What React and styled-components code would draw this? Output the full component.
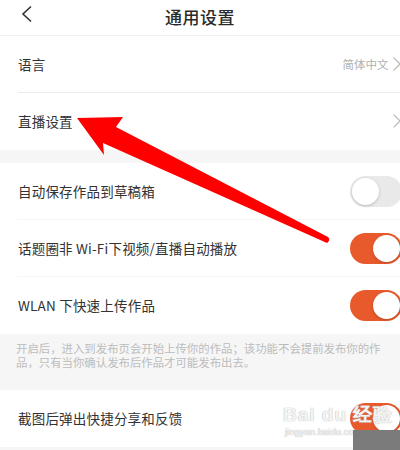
import React from "react";
import styled, { createGlobalStyle } from "styled-components";

const GlobalStyle = createGlobalStyle`
  body {
    margin: 0;
    background: #f6f6f6;
    font-family: "Noto Sans CJK SC", "Noto Sans", sans-serif;
  }
`;

const Page = styled.div`
  position: relative;
  width: 400px;
  height: 450px;
  overflow: hidden;
  background: #f6f6f6;
`;

const Header = styled.div`
  height: 36px;
  display: flex;
  align-items: center;
  justify-content: center;
  position: relative;
  background: #fff;
  border-bottom: 1px solid #f0f0f0;
  box-sizing: border-box;
`;

const Back = styled.div`
  position: absolute;
  left: 20px;
  top: 5px;
  display: flex;
`;

const Title = styled.div`
  font-size: 17px;
  font-weight: 500;
  color: #2a2a2a;
  letter-spacing: 0.5px;
  margin-top: -3px;
`;

const Group = styled.div`
  background: #fff;
  margin-bottom: ${(p) => p.gap || 0}px;
`;

const Row = styled.div`
  height: 57px;
  display: flex;
  align-items: center;
  justify-content: space-between;
  margin-left: 18px;
  box-sizing: border-box;
  border-bottom: 1px solid ${(p) => (p.line ? p.line : "transparent")};
`;

const Label = styled.span`
  font-size: 13.5px;
  color: #333;
  letter-spacing: 0.2px;
`;

const Right = styled.div`
  display: flex;
  align-items: center;
  gap: 4px;
  margin-right: -2px;
`;

const Value = styled.span`
  font-size: 11.5px;
  color: #b0b0b0;
`;

const Track = styled.div`
  width: 52px;
  height: 31px;
  border-radius: 16px;
  margin-right: -2px;
  background: ${(p) => (p.on ? "#e85a2c" : "#e9e9e9")};
  display: flex;
  align-items: center;
  justify-content: ${(p) => (p.on ? "flex-end" : "flex-start")};
  padding: 0 2px;
  box-sizing: border-box;
`;

const Knob = styled.div`
  width: 27px;
  height: 27px;
  border-radius: 50%;
  background: #fff;
  box-shadow: 0 1px 3px rgba(0, 0, 0, 0.2);
`;

const Note = styled.div`
  padding: 7px 12px 0 16px;
  height: 56px;
  box-sizing: border-box;
  font-size: 11.4px;
  line-height: 14px;
  color: #bcbcbc;
`;

const Overlay = styled.svg`
  position: absolute;
  left: 0;
  top: 0;
  pointer-events: none;
`;

const Watermark = styled.div`
  position: absolute;
  left: 283px;
  top: 405px;
  color: rgba(255, 255, 255, 0.85);
  text-shadow: 0 0 1px #bbb, 0 0 1px #bbb;
  font-family: "Liberation Sans", sans-serif;
  line-height: 1;
`;

const WmBrand = styled.div`
  font-size: 19px;
  font-weight: bold;
  letter-spacing: 1px;
`;

const WmUrl = styled.div`
  font-size: 9.5px;
  margin-top: 3px;
  margin-left: 2px;
`;

const GreyPatch = styled.div`
  position: absolute;
  left: 353px;
  top: 430px;
  width: 47px;
  height: 20px;
  background: #7b7b7b;
`;

const Chevron = ({ size = 16, color = "#bbb" }) => (
  <svg width={size * 0.6} height={size} viewBox="0 0 6 10">
    <path d="M1 1l4 4-4 4" fill="none" stroke={color} strokeWidth="0.8" />
  </svg>
);

const Toggle = ({ on }) => (
  <Track on={on ? 1 : 0}>
    <Knob />
  </Track>
);

export default function App() {
  return (
    <Page>
      <GlobalStyle />
      <Header>
        <Back>
          <svg width="14" height="18" viewBox="0 0 14 18">
            <path d="M11 1.5L3 9l8 7.5" fill="none" stroke="#333" strokeWidth="1.6" />
          </svg>
        </Back>
        <Title>通用设置</Title>
      </Header>

      <Group gap={13}>
        <Row line="#ececec">
          <Label>语言</Label>
          <Right>
            <Value>简体中文</Value>
            <Chevron />
          </Right>
        </Row>
        <Row>
          <Label>直播设置</Label>
          <Right>
            <Chevron />
          </Right>
        </Row>
      </Group>

      <Group>
        <Row line="#f7f7f7">
          <Label>自动保存作品到草稿箱</Label>
          <Toggle />
        </Row>
        <Row line="#f7f7f7">
          <Label>话题圈非 Wi-Fi下视频/直播自动播放</Label>
          <Toggle on />
        </Row>
        <Row>
          <Label>WLAN 下快速上传作品</Label>
          <Toggle on />
        </Row>
      </Group>

      <Note>
        开启后，进入到发布页会开始上传你的作品；该功能不会提前发布你的作品，只有当你确认发布后作品才可能发布出去。
      </Note>

      <Group>
        <Row>
          <Label>截图后弹出快捷分享和反馈</Label>
          <Toggle on />
        </Row>
      </Group>

      <Overlay width="400" height="450">
        <path
          d="M77 118 L123 117 L116 127 L328 237 Q331 240 327 243 L103 143 L104 155 Z"
          fill="#ff0000"
        />
      </Overlay>

      <Watermark>
        <WmBrand>Bai du 经验</WmBrand>
        <WmUrl>jingyan.baidu.com</WmUrl>
      </Watermark>
      <GreyPatch />
    </Page>
  );
}
